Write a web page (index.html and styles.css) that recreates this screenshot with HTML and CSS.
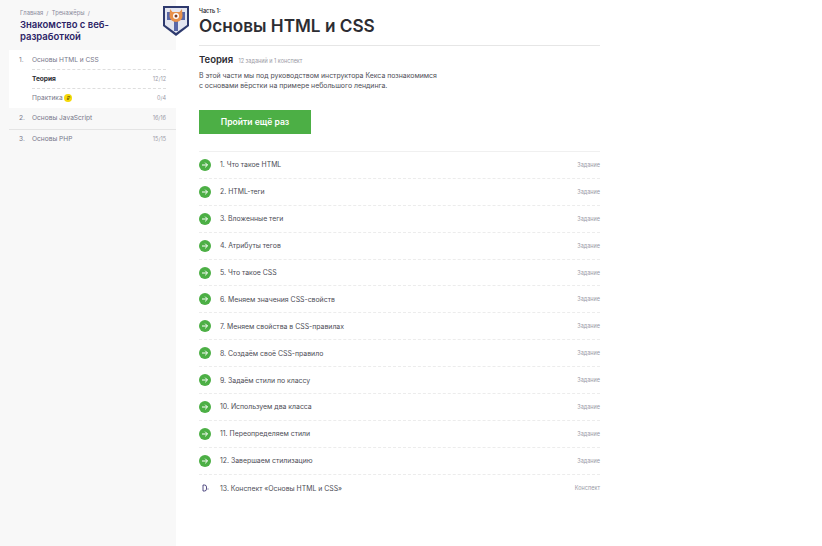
FILE: index.html
```html
<!DOCTYPE html>
<html lang="ru">
<head>
  <meta charset="UTF-8">
  <title>Основы HTML и CSS</title>
  <link rel="stylesheet" href="styles.css">
</head>
<body>
  <svg class="defs" width="0" height="0">
    <symbol id="done" viewBox="0 0 12 12">
      <circle cx="6" cy="6" r="6" fill="#4caf45"/>
      <path d="M3 6h5.5M6.2 3.7L8.5 6 6.2 8.3" fill="none" stroke="#fff" stroke-width="1"/>
    </symbol>
  </svg>

  <aside class="sidebar">
    <div class="sidebar-head">
      <p class="crumbs">Главная &nbsp;/&nbsp; Тренажёры &nbsp;/</p>
      <h2 class="course-title">Знакомство с веб-разработкой</h2>
    </div>
    <div class="chapter chapter-open">
      <div class="chapter-row"><span class="num">1.</span><span class="name">Основы HTML и CSS</span></div>
      <div class="sub-row sub-active"><b>Теория</b><span class="count">12/12</span></div>
      <div class="sub-row"><span>Практика <i class="badge">₽</i></span><span class="count">0/4</span></div>
    </div>
    <div class="chapter chapter-line">
      <div class="chapter-row"><span class="num">2.</span><span class="name">Основы JavaScript</span><span class="count">16/16</span></div>
    </div>
    <div class="chapter chapter-last">
      <div class="chapter-row"><span class="num">3.</span><span class="name">Основы PHP</span><span class="count">15/15</span></div>
    </div>
    <svg class="shield" width="26" height="32" viewBox="0 0 26 32">
      <path d="M0 1h26v20L13 31 0 21z" fill="#2e3a6e"/>
      <path d="M2 3h22v17L13 28 2 20z" fill="#e4e6f0"/>
      <path d="M4 7h18v8h-7v11h-4V15H4z" fill="#5a68a8"/>
      <path d="M7 4l2.5 3h7L19 4l.5 7a6.5 6 0 0 1-13 0z" fill="#e8914a"/>
      <circle cx="13" cy="11" r="3" fill="#fff"/>
      <circle cx="13" cy="11" r="1.5" fill="#7a3a20"/>
    </svg>
  </aside>

  <main class="content">
    <p class="part">Часть 1:</p>
    <h1>Основы HTML и CSS</h1>
    <div class="theory">
      <h3>Теория <small>12 заданий и 1 конспект</small></h3>
      <p>В этой части мы под руководством инструктора Кекса познакомимся<br>с основами вёрстки на примере небольшого лендинга.</p>
      <a class="btn">Пройти ещё раз</a>
    </div>
    <ul class="tasks">
      <li><svg class="ico"><use href="#done"/></svg><span class="task-name">1. Что такое HTML</span><span class="kind">Задание</span></li>
      <li><svg class="ico"><use href="#done"/></svg><span class="task-name">2. HTML-теги</span><span class="kind">Задание</span></li>
      <li><svg class="ico"><use href="#done"/></svg><span class="task-name">3. Вложенные теги</span><span class="kind">Задание</span></li>
      <li><svg class="ico"><use href="#done"/></svg><span class="task-name">4. Атрибуты тегов</span><span class="kind">Задание</span></li>
      <li><svg class="ico"><use href="#done"/></svg><span class="task-name">5. Что такое CSS</span><span class="kind">Задание</span></li>
      <li><svg class="ico"><use href="#done"/></svg><span class="task-name">6. Меняем значения CSS-свойств</span><span class="kind">Задание</span></li>
      <li><svg class="ico"><use href="#done"/></svg><span class="task-name">7. Меняем свойства в CSS-правилах</span><span class="kind">Задание</span></li>
      <li><svg class="ico"><use href="#done"/></svg><span class="task-name">8. Создаём своё CSS-правило</span><span class="kind">Задание</span></li>
      <li><svg class="ico"><use href="#done"/></svg><span class="task-name">9. Задаём стили по классу</span><span class="kind">Задание</span></li>
      <li><svg class="ico"><use href="#done"/></svg><span class="task-name">10. Используем два класса</span><span class="kind">Задание</span></li>
      <li><svg class="ico"><use href="#done"/></svg><span class="task-name">11. Переопределяем стили</span><span class="kind">Задание</span></li>
      <li><svg class="ico"><use href="#done"/></svg><span class="task-name">12. Завершаем стилизацию</span><span class="kind">Задание</span></li>
      <li><svg class="ico" viewBox="0 0 12 12"><path class="note" d="M4 3h1.5a2 2 0 0 1 2 2v2a2 2 0 0 1-2 2H4zM8.500 7h1"/></svg><span class="task-name">13. Конспект «Основы HTML и CSS»</span><span class="kind">Конспект</span></li>
    </ul>
  </main>
</body>
</html>
```

FILE: styles.css
```css
* {
  box-sizing: border-box;
}

body {
  margin: 0;
  min-height: 546px;
  display: flex;
  font-family: 'Inter', 'Noto Sans', sans-serif;
  color: #2d2d33;
  background-color: #fff;
}

.defs {
  position: absolute;
}

.sidebar {
  position: relative;
  width: 176px;
  flex-shrink: 0;
  padding-left: 9px;
  background-color: #f8f8f8;
}

.sidebar-head {
  padding: 9px 10px 0 11px;
  height: 50px;
}

.crumbs {
  margin: 0;
  font-size: 5.8px;
  line-height: 7px;
  color: #8a8a9a;
}

.course-title {
  margin: 3px 0 0;
  font-size: 9.5px;
  line-height: 12px;
  font-weight: 600;
  color: #2c2467;
  width: 100px;
}

.shield {
  position: absolute;
  left: 163px;
  top: 5px;
}

.chapter-open {
  background-color: #fff;
  height: 58px;
}

.chapter-line {
  border-bottom: 1px solid #e4e4e4;
  height: 22px;
}

.chapter-row {
  display: flex;
  align-items: center;
  height: 20px;
  padding: 0 10px;
  font-size: 6.6px;
  color: #77778a;
}

.chapter-open .chapter-row {
  height: 19px;
}

.chapter-last .chapter-row {
  height: 18px;
}

.num {
  width: 13px;
}

.name {
  flex: 1;
}

.count {
  font-size: 5.5px;
  color: #9a9aa6;
}

.sub-row {
  display: flex;
  align-items: center;
  justify-content: space-between;
  height: 19px;
  margin: 0 10px 0 23px;
  border-top: 1px dashed #dedede;
  font-size: 6.6px;
  color: #77778a;
}

.sub-active b {
  font-weight: 700;
  color: #2d2d33;
}

.badge {
  display: inline-block;
  width: 8px;
  height: 8px;
  border-radius: 50%;
  background-color: #f5d90a;
  color: #5a4a00;
  font-style: normal;
  font-size: 5px;
  line-height: 8px;
  text-align: center;
}

.content {
  width: 401px;
  margin-left: 23px;
}

.part {
  margin: 8px 0 0;
  font-size: 5.5px;
  line-height: 7px;
  font-weight: 600;
}

h1 {
  margin: 1px 0 0;
  padding-bottom: 9px;
  font-size: 17.2px;
  line-height: 20px;
  font-weight: 600;
  border-bottom: 1px solid #e6e6e6;
}

.theory {
  height: 105px;
  padding-top: 8px;
}

h3 {
  margin: 0;
  font-size: 9.5px;
  line-height: 12px;
  font-weight: 600;
}

h3 small {
  margin-left: 3px;
  font-size: 5.5px;
  font-weight: 400;
  color: #9a9aa4;
}

.theory p {
  margin: 4px 0 0;
  font-size: 6.9px;
  line-height: 10px;
  color: #4d4d56;
}

.btn {
  display: block;
  width: 112px;
  height: 24px;
  margin-top: 19px;
  background-color: #4caf45;
  color: #fff;
  font-size: 8.6px;
  font-weight: 600;
  line-height: 24px;
  text-align: center;
}

.tasks {
  margin: 0;
  padding: 0;
  list-style: none;
  border-top: 1px solid #f0f0f0;
}

.tasks li {
  display: flex;
  align-items: center;
  height: 26.9px;
  border-bottom: 1px dashed #ececec;
  font-size: 6.9px;
}

.tasks li:last-child {
  border-bottom: none;
}

.ico {
  width: 12px;
  height: 12px;
  margin-right: 9px;
  flex-shrink: 0;
}

.note {
  fill: none;
  stroke: #2c2467;
  stroke-width: 0.8;
}

.task-name {
  flex: 1;
  color: #4d4d56;
}

.kind {
  font-size: 5.5px;
  color: #9a9aa6;
}
```
